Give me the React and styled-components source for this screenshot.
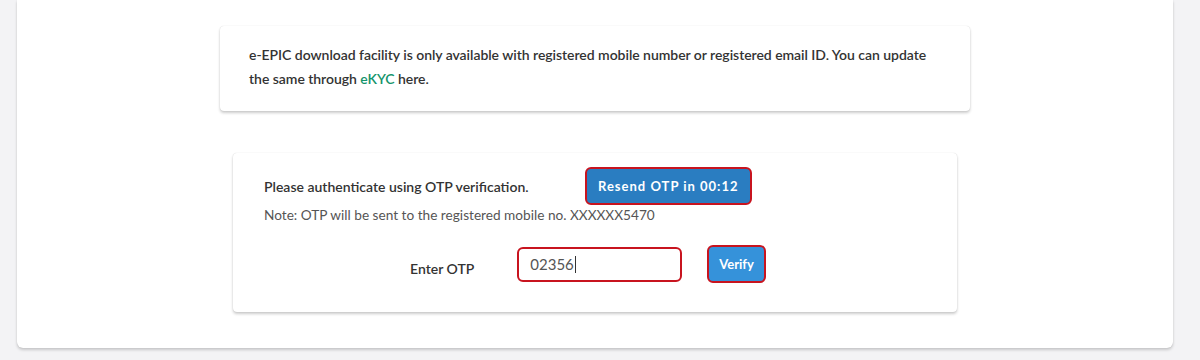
import React from "react";
import styled, { createGlobalStyle } from "styled-components";

const GlobalStyle = createGlobalStyle`
  html, body {
    margin: 0;
    padding: 0;
    background: #f3f3f5;
    font-family: Lato, "Open Sans", Arial, sans-serif;
  }
  * { box-sizing: border-box; }
`;

const Page = styled.div`
  width: 1200px;
  height: 360px;
  padding: 0 27px 0 17px;
  background: #f3f3f5;
  overflow: hidden;
`;

const Panel = styled.div`
  background: #fff;
  height: 348px;
  border-radius: 0 0 6px 6px;
  box-shadow: 0 2px 3px rgba(0, 0, 0, 0.18), 0 0 1px rgba(0, 0, 0, 0.15);
  padding-top: 26px;
  display: flex;
  flex-direction: column;
  align-items: center;
`;

const Card = styled.div`
  width: ${(p) => p.$width}px;
  background: #fff;
  border-radius: 4px;
  box-shadow: 0 2px 3px rgba(0, 0, 0, 0.2), 0 0 1px rgba(0, 0, 0, 0.18);
  margin-top: ${(p) => p.$top || 0}px;
`;

const InfoCard = styled(Card)`
  padding: 17px 28px 20px 29px;
`;

const InfoText = styled.p`
  margin: 0;
  font-size: 14px;
  letter-spacing: -0.04px;
  line-height: 24px;
  font-weight: 600;
  color: #333;
`;

const Link = styled.a`
  color: #14946b;
  text-decoration: none;
`;

const OtpCard = styled(Card)`
  padding: 14px 30px 29px 31px;
`;

const Row = styled.div`
  display: flex;
  align-items: center;
`;

const Prompt = styled.div`
  width: 321px;
  font-size: 14px;
  font-weight: 600;
  color: #333;
`;

const ActionButton = styled.button`
  font-family: Lato, "Open Sans", Arial, sans-serif;
  font-weight: 700;
  color: #fff;
  background: ${(p) => p.$bg};
  border: 2px solid #c8141f;
  border-radius: 6px;
  height: ${(p) => p.$h}px;
  padding: 0 ${(p) => p.$px}px;
  font-size: 13px;
  letter-spacing: ${(p) => p.$ls || 0}px;
  cursor: pointer;
`;

const Note = styled.div`
  font-size: 13.65px;
  line-height: 20px;
  color: #555;
`;

const OtpRow = styled(Row)`
  margin-top: 20px;
  padding-left: 146px;
`;

const Label = styled.div`
  font-size: 14px;
  font-weight: 600;
  color: #333;
  padding-top: 8px;
  margin-right: 43px;
`;

const Field = styled.div`
  width: 165px;
  height: 35px;
  border: 2px solid #c8141f;
  border-radius: 6px;
  padding: 0 11px;
  display: flex;
  align-items: center;
  font-size: 15px;
  color: #555;
  margin-right: 25px;
`;

const Caret = styled.span`
  display: inline-block;
  width: 1px;
  height: 17px;
  background: #333;
  margin-left: 1px;
`;

export default function App() {
  return (
    <>
      <GlobalStyle />
      <Page>
        <Panel>
          <InfoCard $width={750}>
            <InfoText>
              e-EPIC download facility is only available with registered mobile number or registered email ID. You can update the same through <Link href="#">eKYC</Link> here.
            </InfoText>
          </InfoCard>
          <OtpCard $width={724} $top={42}>
            <Row>
              <Prompt>Please authenticate using OTP verification.</Prompt>
              <ActionButton $bg="#2a7dc1" $h={38} $px={11} $ls={1}>
                Resend OTP in 00:12
              </ActionButton>
            </Row>
            <Note>Note: OTP will be sent to the registered mobile no. XXXXXX5470</Note>
            <OtpRow>
              <Label>Enter OTP</Label>
              <Field>
                02356
                <Caret />
              </Field>
              <ActionButton $bg="#3592da" $h={38} $px={10}>
                Verify
              </ActionButton>
            </OtpRow>
          </OtpCard>
        </Panel>
      </Page>
    </>
  );
}
